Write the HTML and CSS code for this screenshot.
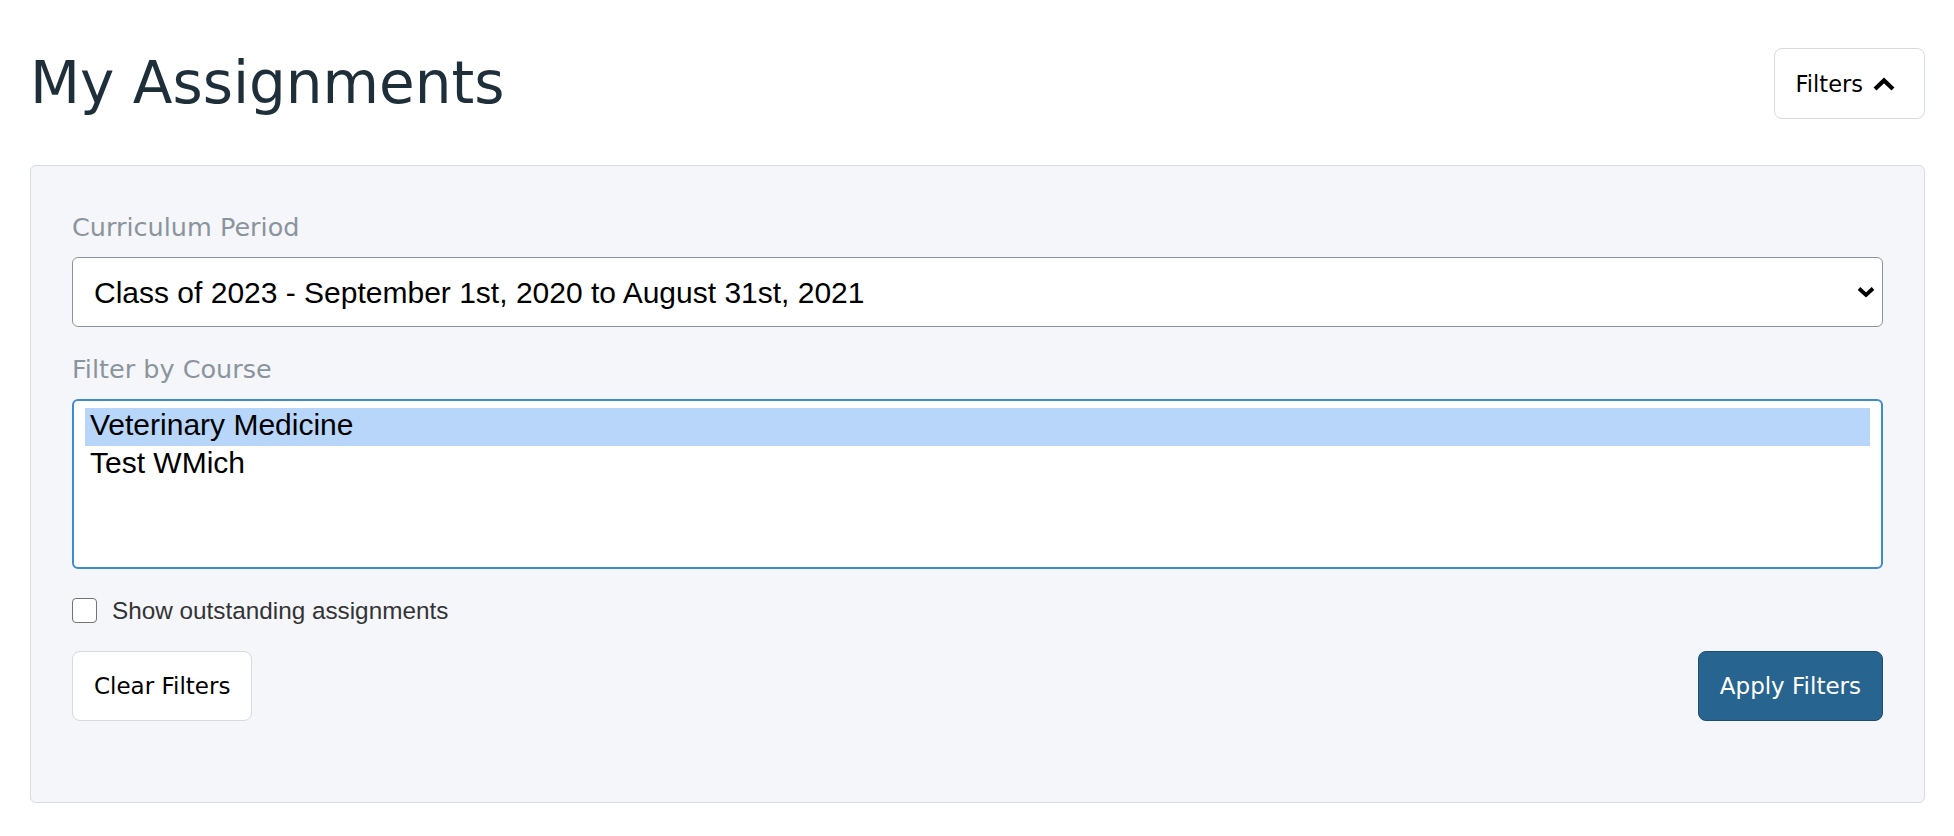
FILE: index.html
```html
<!DOCTYPE html>
<html lang="en">
<head>
<meta charset="UTF-8" />
<meta name="viewport" content="width=device-width, initial-scale=1" />
<title>My Assignments</title>
<link rel="stylesheet" href="styles.css">
</head>
<body>

<main class="page">
  <header class="page-header">
    <h1 class="page-title">My Assignments</h1>
    <button type="button" class="btn btn-toggle" aria-expanded="true">
      Filters
      <svg class="chevron-up" width="22" height="14" viewBox="0 0 22 14" aria-hidden="true">
        <polyline points="2,12 11,3.5 20,12" fill="none" stroke="#000" stroke-width="4.2" />
      </svg>
    </button>
  </header>

  <section class="filter-panel">
    <form class="filter-form" onsubmit="event.preventDefault();">
      <label class="field-label" for="period">Curriculum Period</label>
      <div class="select-wrap">
        <select id="period" class="field-select">
          <option selected>Class of 2023 - September 1st, 2020 to August 31st, 2021</option>
          <option>Class of 2024 - September 1st, 2021 to August 31st, 2022</option>
        </select>
        <svg class="select-arrow" width="18" height="11" viewBox="0 0 18 11" aria-hidden="true">
          <polyline points="2,2 9,8.5 16,2" fill="none" stroke="#000" stroke-width="3.8" />
        </svg>
      </div>

      <label class="field-label field-label-spaced" for="course">Filter by Course</label>
      <select id="course" class="field-list" multiple size="4">
        <option selected>Veterinary Medicine</option>
        <option>Test WMich</option>
      </select>

      <label class="check-row">
        <input type="checkbox" class="check-box" />
        <span>Show outstanding assignments</span>
      </label>

      <div class="form-actions">
        <button type="button" class="btn btn-light">Clear Filters</button>
        <button type="submit" class="btn btn-primary">Apply Filters</button>
      </div>
    </form>
  </section>
</main>

</body>
</html>
```

FILE: styles.css
```css
/* Reset & base */
*, *::before, *::after {
  box-sizing: border-box;
}
body {
  margin: 0;
  padding: 48px 29px 0 30px;
  background: #ffffff;
  font-family: "DejaVu Sans", Verdana, sans-serif;
  color: #000;
}

/* Header */
.page-header {
  display: flex;
  justify-content: space-between;
  align-items: center;
  height: 71px;
}
.page-title {
  margin: 0;
  font-size: 58px;
  font-weight: 400;
  line-height: 1.2;
  color: #1f2f3a;
}

/* Buttons */
.btn {
  display: inline-flex;
  align-items: center;
  height: 70px;
  padding: 0 21px;
  border: 1px solid #d7dade;
  border-radius: 8px;
  background: #ffffff;
  color: #000;
  font-family: "DejaVu Sans", Verdana, sans-serif;
  font-size: 23px;
  cursor: pointer;
}
.btn-toggle {
  height: 71px;
  padding: 0 29px 0 21px;
  gap: 10px;
  font-size: 22.5px;
}
.btn-primary {
  background: #27648f;
  border-color: #1d4e71;
  color: #ffffff;
}

/* Panel */
.filter-panel {
  margin-top: 46px;
  background: #f5f6fa;
  border: 1px solid #d8dbe0;
  border-radius: 6px;
  padding: 43px 41px 81px;
}
.filter-form {
  display: flex;
  flex-direction: column;
}
.field-label {
  font-size: 25.5px;
  line-height: 37px;
  color: #8b949c;
  margin-bottom: 11px;
}
.field-label-spaced {
  margin-top: 24px;
}

/* Selects */
.select-wrap {
  position: relative;
}
.field-select {
  -webkit-appearance: none;
  appearance: none;
  width: 100%;
  height: 70px;
  padding: 0 50px 0 21px;
  border: 1px solid #8c949b;
  border-radius: 6px;
  background: #ffffff;
  color: #000;
  font-family: "Liberation Sans", Arial, sans-serif;
  font-size: 30px;
}
.select-arrow {
  position: absolute;
  right: 8px;
  top: 50%;
  transform: translateY(-50%);
  pointer-events: none;
}
.field-list {
  width: 100%;
  height: 170px;
  padding: 7px 11px;
  border: 2px solid #3d8bd2;
  border-radius: 6px;
  background: #ffffff;
  color: #000;
  font-family: "Liberation Sans", Arial, sans-serif;
  font-size: 30px;
  outline: none;
  overflow: hidden;
}
.field-list option {
  padding: 0 5px;
  line-height: 38px;
  height: 38px;
  color: #000;
}
.field-list option:checked {
  background: #b8d6f9 linear-gradient(#b8d6f9, #b8d6f9);
  color: #000;
}

/* Checkbox */
.check-row {
  display: flex;
  align-items: center;
  gap: 15px;
  height: 25px;
  margin-top: 29px;
  font-family: "Liberation Sans", Arial, sans-serif;
  font-size: 24.3px;
  color: #333;
  cursor: pointer;
}
.check-box {
  -webkit-appearance: none;
  appearance: none;
  width: 25px;
  height: 25px;
  margin: 0;
  border: 1.5px solid #737373;
  border-radius: 4px;
  background: #ffffff;
}

/* Actions */
.form-actions {
  display: flex;
  justify-content: space-between;
  margin-top: 28px;
}
```
